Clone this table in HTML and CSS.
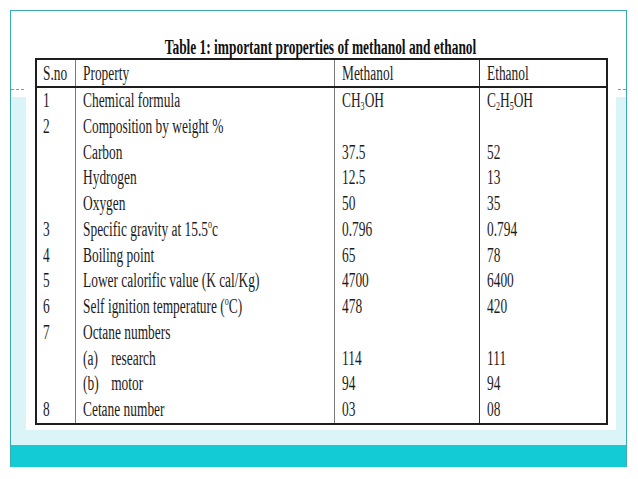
FILE: index.html
```html
<!DOCTYPE html>
<html>
<head>
<meta charset="utf-8">
<link rel="stylesheet" href="styles.css">
</head>
<body>
<div class="frame">
  <div class="topband"></div>
  <div class="panel"></div>
  <div class="bar"></div>
  <div class="sheet">
    <div class="title"><span class="sq">Table 1: important properties of methanol and ethanol</span></div>
    <table class="props">
      <colgroup>
        <col class="c-sno"><col class="c-prop"><col class="c-meth"><col class="c-eth">
      </colgroup>
      <thead>
        <tr><th class="sno"><span class="sq">S.no</span></th><th class="sep-light"><span class="sq">Property</span></th><th class="sep-light"><span class="sq">Methanol</span></th><th class="sep-dark"><span class="sq">Ethanol</span></th></tr>
      </thead>
      <tbody>
        <tr><td class="sno"><span class="sq">1</span></td><td class="sep-light"><span class="sq">Chemical formula</span></td><td class="sep-light"><span class="sq">CH<sub>3</sub>OH</span></td><td class="sep-dark"><span class="sq">C<sub>2</sub>H<sub>5</sub>OH</span></td></tr>
        <tr><td class="sno"><span class="sq">2</span></td><td class="sep-light"><span class="sq">Composition by weight %</span></td><td class="sep-light"></td><td class="sep-dark"></td></tr>
        <tr><td class="sno"></td><td class="sep-light"><span class="sq">Carbon</span></td><td class="sep-light"><span class="sq">37.5</span></td><td class="sep-dark"><span class="sq">52</span></td></tr>
        <tr><td class="sno"></td><td class="sep-light"><span class="sq">Hydrogen</span></td><td class="sep-light"><span class="sq">12.5</span></td><td class="sep-dark"><span class="sq">13</span></td></tr>
        <tr><td class="sno"></td><td class="sep-light"><span class="sq">Oxygen</span></td><td class="sep-light"><span class="sq">50</span></td><td class="sep-dark"><span class="sq">35</span></td></tr>
        <tr><td class="sno"><span class="sq">3</span></td><td class="sep-light"><span class="sq">Specific gravity at 15.5<sup>o</sup>c</span></td><td class="sep-light"><span class="sq">0.796</span></td><td class="sep-dark"><span class="sq">0.794</span></td></tr>
        <tr><td class="sno"><span class="sq">4</span></td><td class="sep-light"><span class="sq">Boiling point</span></td><td class="sep-light"><span class="sq">65</span></td><td class="sep-dark"><span class="sq">78</span></td></tr>
        <tr><td class="sno"><span class="sq">5</span></td><td class="sep-light"><span class="sq">Lower calorific value (K cal/Kg)</span></td><td class="sep-light"><span class="sq">4700</span></td><td class="sep-dark"><span class="sq">6400</span></td></tr>
        <tr><td class="sno"><span class="sq">6</span></td><td class="sep-light"><span class="sq">Self ignition temperature (<sup>o</sup>C)</span></td><td class="sep-light"><span class="sq">478</span></td><td class="sep-dark"><span class="sq">420</span></td></tr>
        <tr><td class="sno"><span class="sq">7</span></td><td class="sep-light"><span class="sq">Octane numbers</span></td><td class="sep-light"></td><td class="sep-dark"></td></tr>
        <tr><td class="sno"></td><td class="sep-light"><span class="sq"><span class="lbl">(a)</span>research</span></td><td class="sep-light"><span class="sq">114</span></td><td class="sep-dark"><span class="sq">111</span></td></tr>
        <tr><td class="sno"></td><td class="sep-light"><span class="sq"><span class="lbl">(b)</span>motor</span></td><td class="sep-light"><span class="sq">94</span></td><td class="sep-dark"><span class="sq">94</span></td></tr>
        <tr><td class="sno"><span class="sq">8</span></td><td class="sep-light"><span class="sq">Cetane number</span></td><td class="sep-light"><span class="sq">03</span></td><td class="sep-dark"><span class="sq">08</span></td></tr>
      </tbody>
    </table>
  </div>
</div>
</body>
</html>
```
FILE: styles.css
```css
html, body {
  margin: 0;
  padding: 0;
  background: #ffffff;
}
body {
  width: 638px;
  height: 479px;
  overflow: hidden;
  font-family: "Liberation Serif", "Times New Roman", serif;
  color: #1c1c1c;
}
.frame {
  margin: 10px 0 0 10px;
  width: 615px;
  border: 1px solid #3aaab7;
  border-bottom: none;
  display: grid;
  grid-template-columns: 15px 590px 10px;
  grid-template-rows: 79px 7px 348px 22px;
}
.topband {
  grid-column: 1 / -1;
  grid-row: 1;
  border-bottom: 1px dashed #5aaab6;
}
.panel {
  grid-column: 1 / -1;
  grid-row: 3;
  background: #daf4f7;
}
.bar {
  grid-column: 1 / -1;
  grid-row: 4;
  background: #13cbd5;
}
.sheet {
  grid-column: 2;
  grid-row: 1 / 4;
  margin-bottom: 15px;
  background: #ffffff;
  padding: 26px 0 0 9px;
}
.sq {
  display: inline-block;
  transform: scaleX(0.67);
  transform-origin: left center;
  white-space: nowrap;
}
.title {
  width: 571px;
  text-align: center;
  font-weight: bold;
  font-size: 20px;
  line-height: 20px;
  height: 21px;
  color: #111;
}
.title .sq {
  transform-origin: center center;
}
.props {
  border-collapse: collapse;
  table-layout: fixed;
  width: 571px;
  border: 2px solid #1e1e1e;
  font-size: 20px;
}
.c-sno { width: 39px; }
.c-prop { width: 259px; }
.c-meth { width: 145px; }
.c-eth { width: 128px; }
.props th, .props td {
  padding: 0 0 0 7px;
  text-align: left;
  font-weight: normal;
  vertical-align: top;
  overflow: visible;
}
.props th {
  height: 26px;
  line-height: 26px;
  border-bottom: 2px solid #1e1e1e;
}
.props td {
  height: 25.75px;
  line-height: 25.75px;
}
.props .sno {
  padding-left: 6px;
}
.sep-light {
  border-left: 1px solid #7a7a7a;
}
.sep-dark {
  border-left: 1px solid #2a2a2a;
}
.props sub, .props sup {
  font-size: 12px;
  line-height: 0;
}
.props sub {
  vertical-align: -3px;
}
.props sup {
  vertical-align: 8px;
}
.lbl {
  display: inline-block;
  width: 42px;
}
```
